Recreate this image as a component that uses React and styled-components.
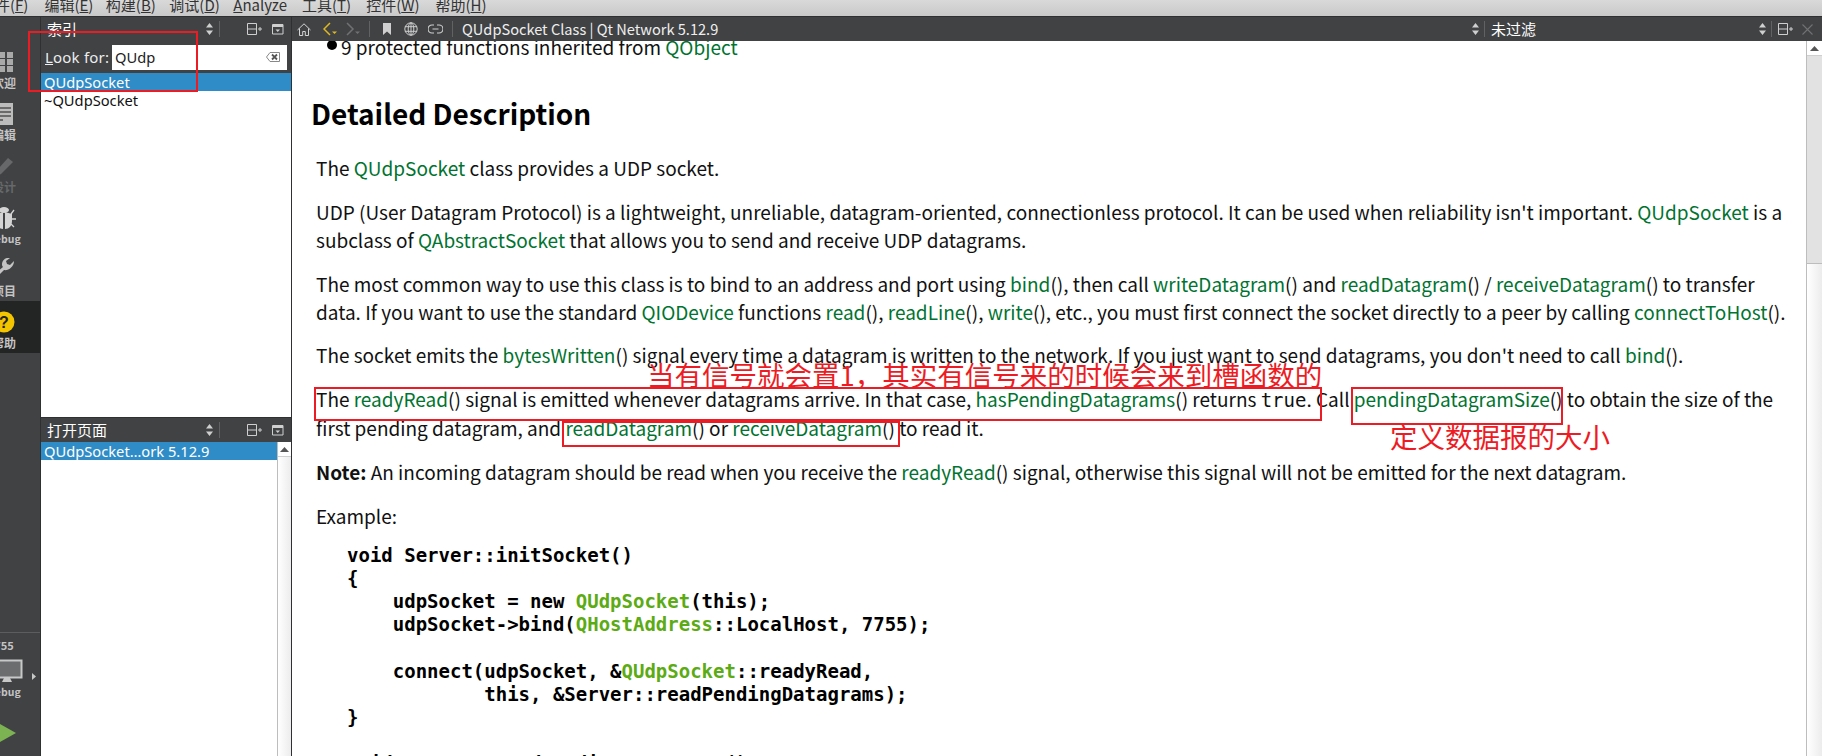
import styled, { createGlobalStyle } from "styled-components";

const cjk = `"Noto Sans CJK SC", "Noto Sans", sans-serif`;
const ui = `"Noto Sans", "Noto Sans CJK SC", sans-serif`;
const red = "#ed1c24";

const GlobalStyle = createGlobalStyle`
  html, body { margin: 0; padding: 0; background: #fff; }
  #root { width: 1822px; height: 756px; overflow: hidden; }
`;

const Page = styled.div`
  position: relative;
  width: 1822px;
  height: 756px;
  display: flex;
  flex-direction: column;
  overflow: hidden;
  font-family: ${ui};
`;

const MenuBar = styled.div`
  height: 16px;
  flex: none;
  display: flex;
  overflow: hidden;
  background: linear-gradient(#d9d9d9, #c9c9c9);
`;

const MenuItem = styled.div`
  font: 15px/20px ${cjk};
  color: #333;
  margin-top: -5px;
  margin-left: ${({ $left }) => $left}px;
  white-space: nowrap;
  flex: none;
  u { text-underline-offset: 1px; }
`;

const Body = styled.div`
  flex: 1;
  display: flex;
  min-height: 0;
`;

const Rail = styled.nav`
  width: 40px;
  flex: none;
  display: flex;
  flex-direction: column;
  overflow: hidden;
  background: #404244;
  border-right: 1px solid #2f3032;
  border-top: 1px solid #2f3032;
  padding-top: 24px;
`;

const RailItem = styled.div`
  width: 64px;
  height: 52px;
  flex: none;
  margin-left: -24px;
  padding-right: 8px;
  box-sizing: border-box;
  display: flex;
  flex-direction: column;
  align-items: center;
  background: ${({ $active }) => ($active ? "#232524" : "transparent")};
  padding-top: 9px;
`;

const RailIcon = styled.div`
  height: 24px;
  display: flex;
  align-items: center;
  justify-content: center;
`;

const RailLabel = styled.div`
  margin-top: 2px;
  font: 700 ${({ $latin }) => ($latin ? "10.5px" : "12px")}/14px ${cjk};
  color: ${({ $dim }) => ($dim ? "#66686a" : "#c4c4c4")};
  white-space: nowrap;
`;

const RailBottom = styled.div`
  margin-top: auto;
  height: 124px;
  flex: none;
  width: 64px;
  margin-left: -24px;
  padding-right: 8px;
  box-sizing: border-box;
  border-top: 1px solid #5b5d5f;
  display: flex;
  flex-direction: column;
  align-items: center;
  overflow: hidden;
  padding-top: 5px;
`;

const KitName = styled.div`
  font: 700 11px/14px ${cjk};
  color: #c4c4c4;
`;

const KitIcon = styled.div`
  display: flex;
  align-items: center;
  margin: 7px 0 0 24px;
`;

const RunIcon = styled.div`
  margin-top: 17px;
  margin-left: -6px;
  display: flex;
`;

const Sidebar = styled.aside`
  width: 250px;
  flex: none;
  display: flex;
  flex-direction: column;
  border-right: 1px solid #2f3032;
`;

const ToolBar = styled.div`
  height: 25px;
  flex: none;
  box-sizing: border-box;
  display: flex;
  align-items: center;
  background: #404244;
  border-top: 1px solid #2f3032;
  color: #fff;
  font: 14px/20px ${cjk};
`;

const PaneTitle = styled.div`
  margin-left: 6px;
  flex: 1;
  font: 15px/20px ${cjk};
`;

const Sep = styled.div`
  width: 1px;
  height: 16px;
  background: #606264;
  margin: ${({ $m }) => $m || "0"};
  flex: none;
`;

const Slot = styled.span`
  display: inline-flex;
  flex: none;
  margin: ${({ $m }) => $m || "0"};
`;

const LookRow = styled.div`
  height: 32px;
  flex: none;
  display: flex;
  align-items: center;
  background: #404244;
  padding-left: 4px;
  color: #eee;
  font-size: 15px;
  box-sizing: border-box;
`;

const LookLabel = styled.label`
  width: 67px;
  flex: none;
  letter-spacing: 0.2px;
`;

const SearchField = styled.div`
  width: 175px;
  height: 25px;
  background: #fff;
  display: flex;
  align-items: center;
  justify-content: space-between;
  padding: 0 7px 0 3px;
  box-sizing: border-box;
  color: #222;
  font-size: 14.7px;
`;

const List = styled.div`
  flex: ${({ $fixed }) => ($fixed ? `none` : 1)};
  height: ${({ $fixed }) => ($fixed ? `${$fixed}px` : "auto")};
  background: #fff;
  min-height: 0;
  display: flex;
`;

const ListRows = styled.div`
  flex: 1;
  min-width: 0;
`;

const Row = styled.div`
  height: 18px;
  padding-left: 3px;
  font-size: 14.7px;
  line-height: 18px;
  color: ${({ $selected }) => ($selected ? "#fff" : "#111")};
  background: ${({ $selected }) => ($selected ? "#308cc6" : "transparent")};
  white-space: nowrap;
`;

const Scrollbar = styled.div`
  width: ${({ $w }) => $w}px;
  flex: none;
  box-sizing: border-box;
  border-left: 1px solid #bdbdbd;
  display: flex;
  flex-direction: column;
  background: linear-gradient(90deg, #fff, #ececec);
`;

const ScrollButton = styled.div`
  height: 14px;
  flex: none;
  display: flex;
  align-items: center;
  justify-content: center;
  background: #fff;
  border-bottom: 1px solid #cfcfcf;
`;

const ScrollTrack = styled.div`
  height: ${({ $h }) => $h}px;
  flex: none;
  background: #e2e2e2;
  border-bottom: 1px solid #bdbdbd;
`;

const Main = styled.main`
  flex: 1;
  min-width: 0;
  display: flex;
  flex-direction: column;
`;

const PageTitle = styled.div`
  font-size: 14.6px;
  color: #eee;
  margin-left: 9px;
  flex: 1;
  white-space: nowrap;
`;

const FilterLabel = styled.div`
  font: 15px/20px ${cjk};
  color: #fff;
  margin-left: 6px;
  width: 267px;
`;

const DocArea = styled.div`
  flex: 1;
  min-height: 0;
  display: flex;
  background: #fff;
`;

const Doc = styled.article`
  flex: 1;
  min-width: 0;
  overflow: hidden;
  padding-left: 24px;
  font: 19px/28px ${cjk};
  color: #111;
  white-space: nowrap;
`;

const Bullet = styled.div`
  margin: -8px 0 0 11px;
  display: flex;
  align-items: center;
  gap: 4px;
  &::before {
    content: "";
    width: 10px;
    height: 10px;
    border-radius: 50%;
    background: #000;
    margin-top: -5px;
  }
`;

const Heading = styled.h2`
  margin: 33px 0 22px -5px;
  font: 700 28px/38px ${cjk};
  color: #000;
`;

const Para = styled.p`
  margin: 0 0 15.8px;
`;

const A = styled.span`
  color: #007330;
`;

const Tt = styled.span`
  font-family: "DejaVu Sans Mono", monospace;
  font-size: 19px;
`;

const Code = styled.pre`
  margin: -2px 0 0 31px;
  font: 700 19px/23.2px "DejaVu Sans Mono", monospace;
  color: #000;
`;

const T = styled.span`
  color: #5cab15;
`;

const Box = styled.div`
  position: absolute;
  left: ${({ $x }) => $x}px;
  top: ${({ $y }) => $y}px;
  width: ${({ $w }) => $w}px;
  height: ${({ $h }) => $h}px;
  box-sizing: border-box;
  border: 2px solid ${red};
`;

const Note = styled.div`
  position: absolute;
  left: ${({ $x }) => $x}px;
  top: ${({ $y }) => $y}px;
  font: 27.5px/34px ${cjk};
  color: ${red};
  white-space: nowrap;
`;

const UpDown = () => (
  <svg width="9" height="14" viewBox="0 0 9 14">
    <path d="M4.5 1 8 5.5H1z M1 8.5h7L4.5 13z" fill="#cfcfcf" />
  </svg>
);

const SplitPlus = () => (
  <svg width="16" height="13" viewBox="0 0 16 13" fill="none" stroke="#cfcfcf">
    <path d="M.5.5h9v11h-9zM.5 6h9M11 6h4M13 4v4" />
  </svg>
);

const CloseBox = () => (
  <svg width="12" height="11" viewBox="0 0 12 11" fill="none">
    <path d="M.5.5h10.500v9.500H.5z" stroke="#cfcfcf" />
    <path d="M1 1h10v2H1z" fill="#cfcfcf" />
    <path d="M3.500 5.500h4.500L5.750 8z" fill="#cfcfcf" />
  </svg>
);

const ClearIcon = () => (
  <svg width="14" height="10" viewBox="0 0 14 10">
    <path d="M4 .5h9.500v9H4L.5 5z" fill="#fff" stroke="#888" />
    <path d="M6 2.500l5 5m0-5l-5 5" stroke="#555" strokeWidth="1.800" />
  </svg>
);

const ArrowUp = () => (
  <svg width="9" height="5" viewBox="0 0 9 5">
    <path d="M4.500 0 9 5H0z" fill="#555" />
  </svg>
);

const Nav = ({ color, flip }) => (
  <svg width="17" height="14" viewBox="0 0 17 14" fill="none">
    <path d={flip ? "M1 1l6 6-6 6" : "M7 1 1 7l6 6"} stroke={color} strokeWidth="1.500" />
    <path d="M9 9.500h5L11.500 12z" fill={color} />
  </svg>
);

const Home = () => (
  <svg width="14" height="13" viewBox="0 0 14 13" fill="none" stroke="#d4d4d4">
    <path d="M.5 7 7 .8 13.500 7M2.500 5.500v7h3.200v-4h2.600v4h3.200v-7" />
  </svg>
);

const Bookmark = () => (
  <svg width="8" height="12" viewBox="0 0 8 12">
    <path d="M0 0h8v12L4 8.500 0 12z" fill="#cfcfcf" />
  </svg>
);

const Globe = () => (
  <svg width="14" height="14" viewBox="0 0 14 14" fill="none" stroke="#cfcfcf">
    <circle cx="7" cy="7" r="6.200" />
    <ellipse cx="7" cy="7" rx="2.800" ry="6.200" />
    <path d="M1 4.700h12M1 9.300h12M7 .8v12.400" />
  </svg>
);

const LinkIcon = () => (
  <svg width="15" height="10" viewBox="0 0 15 10" fill="none" stroke="#cfcfcf" strokeWidth="1.200">
    <path d="M6 1H4a4 4 0 0 0 0 8h2M9 1h2a4 4 0 0 1 0 8H9M4.500 5h6" />
  </svg>
);

const CloseX = () => (
  <svg width="11" height="11" viewBox="0 0 11 11" stroke="#707274" strokeWidth="1.100">
    <path d="M.5.500l10 10m0-10l-10 10" />
  </svg>
);

// rail drawings share a 28px box; the left part of it is cut off by the window edge
const GridIcon = () => (
  <svg width="28" height="20" viewBox="0 0 28 20" fill="#a9a9a9">
    {[0, 7, 14].map((y) =>
      [1, 9, 17].map((x) => <rect key={`${x}-${y}`} x={x} y={y} width="6" height="6" />)
    )}
  </svg>
);

const EditIcon = () => (
  <svg width="28" height="24" viewBox="0 0 28 24">
    <rect x="-2" y="1" width="25" height="22" fill="#bcbcbc" />
    <path d="M1 6h20M1 10h20M1 14h20M1 18h12" stroke="#6b6b6b" strokeWidth="2" />
  </svg>
);

const PencilIcon = () => (
  <svg width="28" height="22" viewBox="0 0 28 22">
    <path d="M6 21l1-6L18 3l5 4L11 19z" fill="#66686a" />
  </svg>
);

const BugIcon = () => (
  <svg width="28" height="24" viewBox="0 0 28 24" fill="#d4d4d4">
    <ellipse cx="14" cy="4" rx="5" ry="3" />
    <path d="M6 8l7-2v17c-4 0-7-3-7-8zM22 8l-7-2v17c4 0 7-3 7-8z" />
    <path d="M4 4l3 4M24 4l-3 4M2 13h4M26 13h-4M4 21l3-3M24 21l-3-3" stroke="#d4d4d4" strokeWidth="1.300" />
  </svg>
);

const WrenchIcon = () => (
  <svg width="28" height="24" viewBox="0 0 28 24">
    <path
      d="M24 3l-4 4-3-1-1-3 4-3c-4-1-8 2-8 6 0 1 0 2 1 3L1 19c-2 2 1 5 3 3L14 12c4 1 10-3 10-9z"
      fill="#c4c4c4"
    />
  </svg>
);

const HelpIcon = () => (
  <svg width="28" height="22" viewBox="0 0 28 22">
    <circle cx="14" cy="11" r="10.500" fill="#f5c400" />
    <text x="14" y="16.500" textAnchor="middle" fontFamily="Liberation Sans, sans-serif" fontWeight="700" fontSize="16" fill="#222">
      ?
    </text>
  </svg>
);

const MonitorIcon = () => (
  <svg width="50" height="24" viewBox="0 0 50 24">
    <rect x="1.500" y="1.500" width="29" height="17" fill="#6b6d6f" stroke="#c8c8c8" strokeWidth="2" />
    <path d="M13 19h6l2 4H11z" fill="#c8c8c8" />
    <path d="M41 14l4 3.500-4 3.500z" fill="#c8c8c8" />
  </svg>
);

const PlayIcon = () => (
  <svg width="30" height="34" viewBox="0 0 30 34">
    <path d="M0 0l30 17L0 34z" fill="#7cb252" />
  </svg>
);

const menu = [
  { left: -5, text: "件(", key: "F" },
  { left: 16, text: "编辑(", key: "E" },
  { left: 12.4, text: "构建(", key: "B" },
  { left: 13.5, text: "调试(", key: "D" },
];

const railItems = [
  { label: "欢迎", icon: <GridIcon /> },
  { label: "编辑", icon: <EditIcon /> },
  { label: "设计", icon: <PencilIcon />, dim: true },
  { label: "Debug", icon: <BugIcon />, latin: true },
  { label: "项目", icon: <WrenchIcon /> },
  { label: "帮助", icon: <HelpIcon />, active: true },
];

const boxes = [
  { x: 28, y: 31, w: 170, h: 61 },
  { x: 314, y: 387, w: 1008, h: 34 },
  { x: 1351, y: 387, w: 212, h: 38 },
  { x: 562, y: 421, w: 338, h: 26 },
];

const PaneButtons = () => (
  <>
    <UpDown />
    <Sep $m="0 0 0 5px" />
    <Slot $m="0 0 0 27px">
      <SplitPlus />
    </Slot>
    <Slot $m="0 7px 0 9px">
      <CloseBox />
    </Slot>
  </>
);

const code = (
  <Code>
    {`void Server::initSocket()
{
    udpSocket = new `}
    <T>QUdpSocket</T>
    {`(this);
    udpSocket->bind(`}
    <T>QHostAddress</T>
    {`::LocalHost, 7755);

    connect(udpSocket, &`}
    <T>QUdpSocket</T>
    {`::readyRead,
            this, &Server::readPendingDatagrams);
}

void Server::readPendingDatagrams()`}
  </Code>
);

export default function App() {
  return (
    <>
      <GlobalStyle />
      <Page>
        <MenuBar>
          {menu.map((m) => (
            <MenuItem key={m.key} $left={m.left}>
              {m.text}
              <u>{m.key}</u>)
            </MenuItem>
          ))}
          <MenuItem $left={13.5}>
            <u>A</u>nalyze
          </MenuItem>
          <MenuItem $left={15}>
            工具(<u>T</u>)
          </MenuItem>
          <MenuItem $left={15}>
            控件(<u>W</u>)
          </MenuItem>
          <MenuItem $left={16}>
            帮助(<u>H</u>)
          </MenuItem>
        </MenuBar>
        <Body>
          <Rail>
            {railItems.map((item) => (
              <RailItem key={item.label} $active={item.active}>
                <RailIcon>{item.icon}</RailIcon>
                <RailLabel $dim={item.dim} $latin={item.latin}>
                  {item.label}
                </RailLabel>
              </RailItem>
            ))}
            <RailBottom>
              <KitName>755</KitName>
              <KitIcon>
                <MonitorIcon />
              </KitIcon>
              <RailLabel $latin>Debug</RailLabel>
              <RunIcon>
                <PlayIcon />
              </RunIcon>
            </RailBottom>
          </Rail>
          <Sidebar>
            <ToolBar>
              <PaneTitle>索引</PaneTitle>
              <PaneButtons />
            </ToolBar>
            <LookRow>
              <LookLabel>
                <u>L</u>ook for:
              </LookLabel>
              <SearchField>
                QUdp
                <ClearIcon />
              </SearchField>
            </LookRow>
            <List $fixed={344}>
              <ListRows>
                <Row $selected>QUdpSocket</Row>
                <Row>~QUdpSocket</Row>
              </ListRows>
            </List>
            <ToolBar>
              <PaneTitle>打开页面</PaneTitle>
              <PaneButtons />
            </ToolBar>
            <List>
              <ListRows>
                <Row $selected>QUdpSocket…ork 5.12.9</Row>
              </ListRows>
              <Scrollbar $w={14}>
                <ScrollButton>
                  <ArrowUp />
                </ScrollButton>
              </Scrollbar>
            </List>
          </Sidebar>
          <Main>
            <ToolBar>
              <Slot $m="0 0 0 5px">
                <Home />
              </Slot>
              <Slot $m="0 0 0 12px">
                <Nav color="#e0b820" />
              </Slot>
              <Slot $m="0 0 0 6px">
                <Nav color="#6f7173" flip />
              </Slot>
              <Sep $m="0 0 0 6px" />
              <Slot $m="0 0 0 13px">
                <Bookmark />
              </Slot>
              <Slot $m="0 0 0 13px">
                <Globe />
              </Slot>
              <Slot $m="0 0 0 10px">
                <LinkIcon />
              </Slot>
              <Sep $m="0 0 0 9px" />
              <PageTitle>QUdpSocket Class | Qt Network 5.12.9</PageTitle>
              <UpDown />
              <Sep $m="0 0 0 4px" />
              <FilterLabel>未过滤</FilterLabel>
              <UpDown />
              <Sep $m="0 0 0 4px" />
              <Slot $m="0 0 0 6px">
                <SplitPlus />
              </Slot>
              <Slot $m="0 9px 0 8px">
                <CloseX />
              </Slot>
            </ToolBar>
            <DocArea>
              <Doc>
                <Bullet>
                  <span>
                    9 protected functions inherited from <A>QObject</A>
                  </span>
                </Bullet>
                <Heading>Detailed Description</Heading>
                <Para>
                  The <A>QUdpSocket</A> class provides a UDP socket.
                </Para>
                <Para>
                  UDP (User Datagram Protocol) is a lightweight, unreliable, datagram-oriented, connectionless protocol. It can be used when reliability isn't important. <A>QUdpSocket</A> is a
                  <br />
                  subclass of <A>QAbstractSocket</A> that allows you to send and receive UDP datagrams.
                </Para>
                <Para>
                  The most common way to use this class is to bind to an address and port using <A>bind</A>(), then call <A>writeDatagram</A>() and <A>readDatagram</A>() / <A>receiveDatagram</A>() to transfer
                  <br />
                  data. If you want to use the standard <A>QIODevice</A> functions <A>read</A>(), <A>readLine</A>(), <A>write</A>(), etc., you must first connect the socket directly to a peer by calling <A>connectToHost</A>().
                </Para>
                <Para>
                  The socket emits the <A>bytesWritten</A>() signal every time a datagram is written to the network. If you just want to send datagrams, you don't need to call <A>bind</A>().
                </Para>
                <Para>
                  The <A>readyRead</A>() signal is emitted whenever datagrams arrive. In that case, <A>hasPendingDatagrams</A>() returns <Tt>true</Tt>. Call <A>pendingDatagramSize</A>() to obtain the size of the
                  <br />
                  first pending datagram, and <A>readDatagram</A>() or <A>receiveDatagram</A>() to read it.
                </Para>
                <Para>
                  <b>Note:</b> An incoming datagram should be read when you receive the <A>readyRead</A>() signal, otherwise this signal will not be emitted for the next datagram.
                </Para>
                <Para>Example:</Para>
                {code}
              </Doc>
              <Scrollbar $w={16}>
                <ScrollButton>
                  <ArrowUp />
                </ScrollButton>
                <ScrollTrack $h={207} />
              </Scrollbar>
            </DocArea>
          </Main>
        </Body>
        {boxes.map((b) => (
          <Box key={b.x} $x={b.x} $y={b.y} $w={b.w} $h={b.h} />
        ))}
        <Note $x={647} $y={357}>当有信号就会置1，其实有信号来的时候会来到槽函数的</Note>
        <Note $x={1390} $y={419}>定义数据报的大小</Note>
      </Page>
    </>
  );
}
